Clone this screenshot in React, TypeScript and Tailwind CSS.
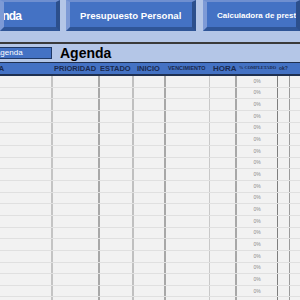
import React from "react";

const cols = [
  "w-[53px] border-r-2 border-[#c4c4c4]",
  "w-[47px] border-r-2 border-[#a8a8a8]",
  "w-[34px] border-r-2 border-[#c0c0c0]",
  "w-[32px] border-r-2 border-[#a8a8a8]",
  "w-[44px] border-r border-[#c8c8c8]",
  "w-[27px] border-r-2 border-[#a8a8a8]",
  "w-[41px] border-r border-[#7f7f7f]",
  "w-[12px] border-r border-[#9a9a9a]",
  "flex-1",
];

function Btn({ children, className }: { children: React.ReactNode; className: string }) {
  return (
    <div
      className={`h-[31px] pt-[3px] bg-[#4472c4] border-l-[4px] border-t-[2px] border-r-[4px] border-b-[4px] border-l-[#7d9ad6] border-t-[#6f8fd0] border-r-[#2c4f8c] border-b-[#2f5597] flex items-center overflow-hidden whitespace-nowrap text-white font-bold ${className}`}
    >
      {children}
    </div>
  );
}

export default function App() {
  const rows = Array.from({ length: 20 });
  return (
    <div
      className="w-[300px] h-[300px] overflow-hidden bg-[#f2f2f2] flex flex-col"
      style={{ fontFamily: '"Liberation Sans", Arial, sans-serif' }}
    >
      <div className="h-[42px] bg-[#b4c6e7] flex items-start shrink-0">
        <Btn className="w-[60px] text-[12px] tracking-[-0.8px] pl-0">
          <span className="-ml-[22px]">Agenda</span>
        </Btn>
        <Btn className="ml-[6px] w-[130px] text-[9.6px] pl-[10px]">Presupuesto Personal</Btn>
        <Btn className="ml-[7px] flex-1 text-[8px] pl-[10px] border-r-0">Calculadora de prestamos</Btn>
      </div>
      <div className="h-[2px] bg-[#3a3a3a] shrink-0" />
      <div className="h-[18px] bg-[#b4c6e7] flex items-center shrink-0">
        <div className="w-[52px] h-[12px] bg-[#4472c4] border-y border-r border-[#1f3864] overflow-hidden whitespace-nowrap flex items-center">
          <span className="text-white text-[8px] -ml-[5px] leading-none">Agenda</span>
        </div>
        <div className="ml-[8px] text-[14px] font-bold text-black leading-none">Agenda</div>
      </div>
      <div className="h-[14px] bg-[#4472c4] border-t border-b-2 border-[#1f3050] flex items-center shrink-0 whitespace-nowrap font-bold text-[#1b2a4e] overflow-hidden">
        <div className="w-[53px] text-[7.5px] overflow-hidden">
          <span className="block -ml-[21px]">TAREA</span>
        </div>
        <div className="w-[47px] text-[7.5px] pl-[1px]">PRIORIDAD</div>
        <div className="w-[34px] text-[7.5px]">ESTADO</div>
        <div className="w-[32px] text-[7.5px] pl-[3px]">INICIO</div>
        <div className="w-[44px] text-[5.4px] pl-[2px]">VENCIMIENTO</div>
        <div className="w-[27px] text-[8px] pl-[3px]">HORA</div>
        <div className="w-[41px] text-[4.4px] pl-[2px]" style={{ fontFamily: '"Liberation Serif", serif' }}>% COMPLETADO</div>
        <div className="w-[12px] text-[5px] pl-[1px]">ok?</div>
        <div className="flex-1" />
      </div>
      <div className="flex flex-col">
        {rows.map((_, i) => (
          <div key={i} className="h-[11.67px] flex border-b border-[#e0e0e0] shrink-0">
            {cols.map((c, j) => (
              <div key={j} className={`${c} h-full flex items-center justify-center`}>
                {j === 6 ? <span className="text-[5px] text-[#8a8a8a] leading-none">0%</span> : null}
              </div>
            ))}
          </div>
        ))}
      </div>
    </div>
  );
}
